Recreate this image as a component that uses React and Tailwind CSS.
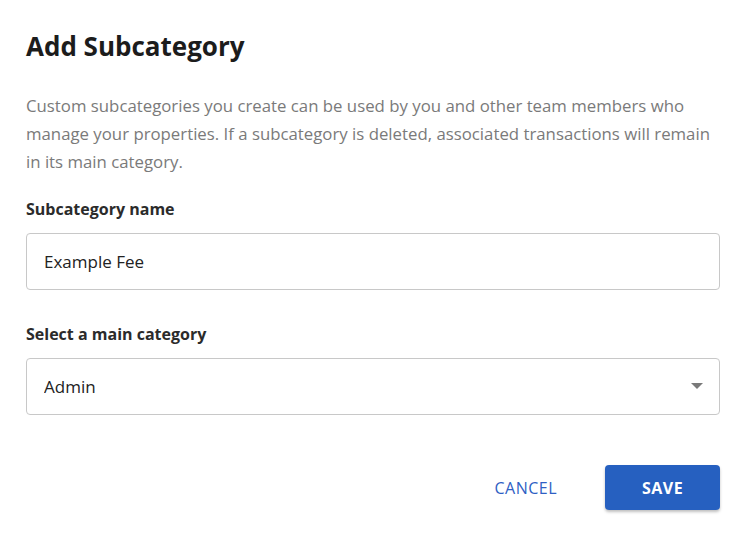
import { useState } from 'react';

const CATEGORIES = ['Admin', 'Utilities', 'Maintenance', 'Insurance'];

export default function App() {
  const [name, setName] = useState('Example Fee');
  const [category, setCategory] = useState('Admin');

  return (
    <div className="min-h-screen bg-white pl-[26px] pr-[27px] pt-[28px] font-['Open_Sans','Noto_Sans',sans-serif]">
      <h1 className="text-[26px] font-bold leading-[36px] text-[#1c1c1c]">Add Subcategory</h1>

      <p className="mt-[28px] text-[16.8px] leading-[28px] text-[#7a7a7a]">
        Custom subcategories you create can be used by you and other team members who manage your properties. If a subcategory is deleted, associated transactions will remain in its main category.
      </p>

      <form className="mt-[22px]" onSubmit={(e) => e.preventDefault()}>
        <label className="block text-[16px] font-bold leading-[22px] text-[#2b2b2b]">Subcategory name</label>
        <input
          value={name}
          onChange={(e) => setName(e.target.value)}
          className="mt-[13px] block h-[57px] w-full rounded-[4px] border border-[#c8c8c8] px-[17px] text-[17px] text-[#222] outline-none"
        />

        <label className="mt-[33px] block text-[16px] font-bold leading-[22px] text-[#2b2b2b]">Select a main category</label>
        <div className="relative mt-[13px]">
          <select
            value={category}
            onChange={(e) => setCategory(e.target.value)}
            className="block h-[57px] w-full appearance-none rounded-[4px] border border-[#c8c8c8] bg-white px-[17px] text-[17px] text-[#222] outline-none"
          >
            {CATEGORIES.map((c) => (
              <option key={c} value={c}>{c}</option>
            ))}
          </select>
          {/* dropdown caret */}
          <svg className="pointer-events-none absolute right-[17px] top-[25px]" width="12" height="7" viewBox="0 0 12 7">
            <path d="M0 0h12L6 6z" fill="#7a7a7a" />
          </svg>
        </div>

        <div className="mt-[50px] flex items-center justify-end gap-[48px]">
          <button type="button" className="text-[16px] font-medium tracking-[0.5px] text-[#2f5fc4]">CANCEL</button>
          <button type="submit" className="h-[45px] w-[115px] rounded-[4px] bg-[#2660c0] text-[16px] font-bold tracking-[0.5px] text-white shadow-[0_2px_3px_rgba(0,0,0,0.25)]">
            SAVE
          </button>
        </div>
      </form>
    </div>
  );
}
